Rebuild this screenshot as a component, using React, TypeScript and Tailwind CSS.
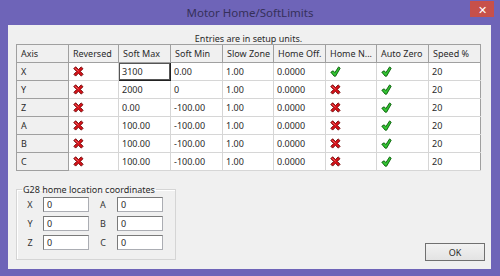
import React from "react";

const RedX = () => (
  <svg width="11" height="11" viewBox="0 0 11 11" className="block">
    <path
      d="M0.8 2.6 L2.6 0.8 L5.5 3.6 L8.2 0.9 L10 2.7 L7.3 5.4 L10.1 8.3 L8.3 10.1 L5.4 7.3 L2.6 10.1 L0.9 8.3 L3.7 5.5 Z"
      fill="#d8121a"
      stroke="#6a0000"
      strokeWidth="0.9"
      strokeLinejoin="round"
    />
    <path d="M2.2 2.4 L5.5 5.2" stroke="#ff7070" strokeWidth="0.8" />
  </svg>
);

const GreenCheck = () => (
  <svg width="11" height="11" viewBox="0 0 11 11" className="block">
    <path
      d="M0.8 6.2 L3.2 4.8 L4.9 6.6 L8.6 0.9 L10.2 2.2 L5.6 10.2 L4.2 10.2 Z"
      fill="#33c433"
      stroke="#075a07"
      strokeWidth="0.9"
      strokeLinejoin="round"
    />
  </svg>
);

type Row = {
  axis: string;
  rev: boolean;
  max: string;
  min: string;
  slow: string;
  off: string;
  homeN: boolean;
  auto: boolean;
  speed: string;
};

const rows: Row[] = [
  { axis: "X", rev: false, max: "3100", min: "0.00", slow: "1.00", off: "0.0000", homeN: true, auto: true, speed: "20" },
  { axis: "Y", rev: false, max: "2000", min: "0", slow: "1.00", off: "0.0000", homeN: false, auto: true, speed: "20" },
  { axis: "Z", rev: false, max: "0.00", min: "-100.00", slow: "1.00", off: "0.0000", homeN: false, auto: true, speed: "20" },
  { axis: "A", rev: false, max: "100.00", min: "-100.00", slow: "1.00", off: "0.0000", homeN: false, auto: true, speed: "20" },
  { axis: "B", rev: false, max: "100.00", min: "-100.00", slow: "1.00", off: "0.0000", homeN: false, auto: true, speed: "20" },
  { axis: "C", rev: false, max: "100.00", min: "-100.00", slow: "1.00", off: "0.0000", homeN: false, auto: true, speed: "20" },
];

const headers = ["Axis", "Reversed", "Soft Max", "Soft Min", "Slow Zone", "Home Off.", "Home N...", "Auto Zero", "Speed %"];
const widths = ["w-[52px]", "w-[50px]", "w-[52px]", "w-[52px]", "w-[51px]", "w-[52px]", "w-[51px]", "w-[52px]", "w-[52px]"];

const Bool = ({ v }: { v: boolean }) => (v ? <GreenCheck /> : <RedX />);

const Field = ({ label }: { label: string }) => (
  <>
    <div className="text-center text-[9px] leading-[15px] text-[#333]">{label}</div>
    <div className="h-[15px] bg-white border border-[#abadb3] border-t-[#7a7a7a] border-l-[#7a7a7a] text-[9px] leading-[13px] pl-[3px] text-[#2a2a2a]">
      0
    </div>
  </>
);

export default function App() {
  return (
    <div className="w-[500px] h-[276px] bg-[#6e64b8] flex flex-col font-['Noto_Sans',sans-serif]">
      <div className="h-[25px] relative flex items-center justify-center">
        <span className="text-[11.5px] text-[#35305a] leading-none pt-[1px]">Motor Home/SoftLimits</span>
        <div className="absolute right-[6px] top-[1px] w-[24px] h-[16px] bg-[#c7504a] flex items-center justify-center text-white text-[11px] leading-none">
          ✕
        </div>
      </div>
      <div className="ml-[8px] w-[483px] h-[244px] bg-[#f0f0f0] flex flex-col pl-[8px]">
        <div className="h-[19px] pt-[8px] w-[465px] text-center text-[9px] leading-[11px] text-[#2a2a2a]">
          Entries are in setup units.
        </div>
        <table className="table-fixed border-collapse w-[465px] border border-[#a0a0a0] text-[9px] text-[#2a2a2a]">
          <thead>
            <tr className="h-[18px]">
              {headers.map((h, i) => (
                <th
                  key={h}
                  className={`${widths[i]} p-0 pl-[4px] text-left font-normal bg-[#f0f0f0] border border-[#a0a0a0] whitespace-nowrap overflow-hidden`}
                >
                  {h}
                </th>
              ))}
            </tr>
          </thead>
          <tbody>
            {rows.map((r, ri) => (
              <tr key={r.axis} className="h-[18px]">
                <td className="p-0 pl-[4px] bg-[#f0f0f0] border border-[#a0a0a0]">{r.axis}</td>
                <td className="p-0 pl-[4px] bg-white border border-[#d6d6d6] border-l-[#a0a0a0]">
                  <Bool v={r.rev} />
                </td>
                <td
                  className={`p-0 pl-[3px] bg-white border ${
                    ri === 0 ? "border-[#222] shadow-[inset_0_0_0_1px_#555]" : "border-[#d6d6d6]"
                  }`}
                >
                  {r.max}
                </td>
                <td className="p-0 pl-[3px] bg-white border border-[#d6d6d6]">{r.min}</td>
                <td className="p-0 pl-[3px] bg-white border border-[#d6d6d6]">{r.slow}</td>
                <td className="p-0 pl-[3px] bg-white border border-[#d6d6d6]">{r.off}</td>
                <td className="p-0 pl-[4px] bg-white border border-[#d6d6d6]">
                  <Bool v={r.homeN} />
                </td>
                <td className="p-0 pl-[4px] bg-white border border-[#d6d6d6]">
                  <Bool v={r.auto} />
                </td>
                <td className="p-0 pl-[3px] bg-white border border-[#d6d6d6] border-r-[#a0a0a0]">{r.speed}</td>
              </tr>
            ))}
          </tbody>
        </table>
        <div className="mt-auto mb-[8px] mr-[6px] flex items-end justify-between">
          <fieldset className="w-[160px] h-[76px] border border-[#d5d5d5] shadow-[inset_1px_1px_0_#fff] p-0 m-0 mb-[1px]">
            <legend className="ml-[5px] px-[1px] text-[9px] leading-[11px] text-[#2a2a2a]">G28 home location coordinates</legend>
            <div className="grid grid-cols-[26px_46px_28px_46px] gap-y-[4px] mt-[2px]">
              <Field label="X" />
              <Field label="A" />
              <Field label="Y" />
              <Field label="B" />
              <Field label="Z" />
              <Field label="C" />
            </div>
          </fieldset>
          <div className="w-[60px] h-[18px] border border-[#707070] bg-gradient-to-b from-[#f2f2f2] to-[#e3e3e3] flex items-center justify-center text-[9px] text-[#2a2a2a] leading-none">
            OK
          </div>
        </div>
      </div>
    </div>
  );
}
